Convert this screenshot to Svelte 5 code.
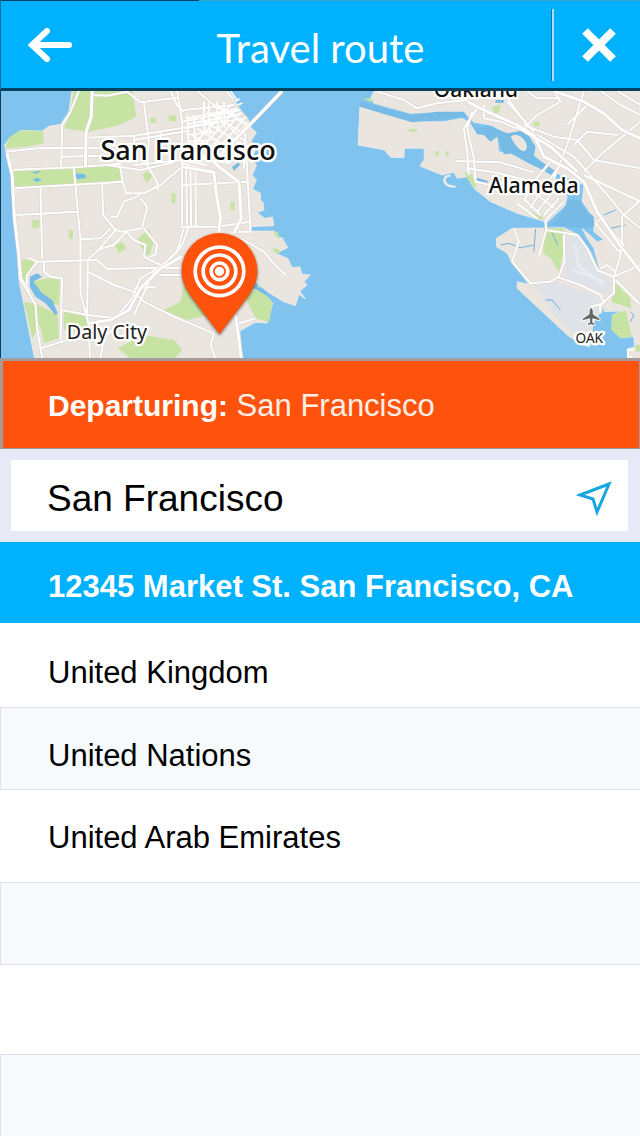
<script>
	let query = $state("San Francisco");

	const selected = "12345 Market St. San Francisco, CA";
	const results = [
		{ name: "United Kingdom", size: "first" },
		{ name: "United Nations", size: "" },
		{ name: "United Arab Emirates", size: "tall" },
		{ name: "", size: "" },
		{ name: "", size: "spacer" },
		{ name: "", size: "" },
	];

	// roads on the San Francisco side, in map units
	const westRoads = [
		"M235 18 L210 80 L185 120 L182 245",
		"M15 200 L110 190 L300 188 L400 175",
		"M30 255 L220 247 L320 240 L358 236 L366 290 L300 295 L38 310",
		"M255 158 L400 152 L540 130 L640 110",
		"M185 215 L310 212",
		"M320 240 L420 255 L520 232",
		"M275 30 L320 32 L380 20 L420 52 L530 38",
		"M430 50 L445 170 L440 240 L470 290 L472 315",
		"M530 18 L545 110 L545 420",
		"M510 18 L530 60 L550 80",
		"M400 150 L403 190 M480 140 L482 230",
		"M400 165 L560 138",
		"M120 310 L125 520 M45 390 L230 380 M220 250 L240 465 L240 625",
		"M305 295 L308 390 L345 435 L290 500 L262 522",
		"M375 325 L430 325 L480 300 L540 250",
		"M366 290 L378 326",
		"M330 395 L350 395 L370 350 L410 335 L420 325",
		"M420 340 L440 365 L425 430 L365 440 L345 435",
		"M240 463 L300 460 L330 430",
		"M290 495 L340 480 L378 440 L400 465 L435 480 L430 515 L480 540",
		"M430 430 L450 455 L470 480 L465 510 L445 515",
		"M85 518 L110 530 L290 525 L320 552 L480 548 L545 550",
		"M130 530 L130 560 L150 575 L185 580 L182 680 L180 765",
		"M240 625 L265 720 L268 820 M262 525 L260 690",
		"M262 560 L340 600 L400 620 L430 650 L520 695 L640 745",
		"M185 675 L260 690 L350 700",
		"M110 530 L80 570 L78 610 L105 660 L110 730 L125 820",
		"M120 790 L215 760 L262 765 M300 820 L310 760 L360 710",
		"M557 250 L560 420 M570 255 L572 425 M585 260 L586 425",
		"M540 425 L650 425 L750 410 M545 300 L740 290",
		"M690 130 L735 170 L750 440 L715 440",
		"M735 150 L730 250",
		"M565 425 L545 480 L510 520 L460 560 L400 690",
		"M550 430 L530 500 L480 545 L420 580 L395 640 L350 695",
		"M400 610 L465 605 M480 570 L545 570",
		"M640 745 L630 780 L645 820",
		"M700 720 L765 700 M720 460 L790 500 L820 535 L855 570",
		"M590 18 L640 60 L700 90 M550 75 L700 60",
		"M545 110 L720 75 M550 130 L735 100",
		"M400 240 L640 215 M550 215 L690 235",
	];
	const westHighways = [
		"M275 18 L272 95 L257 140 L255 245",
		"M845 18 L745 122 L640 230 L660 250 L715 290 L722 400 L700 445",
		"M545 245 L640 262 L648 330 L660 400 L655 445",
		"M705 690 L712 740 L722 820",
		"M545 515 L480 550 L420 610 L385 675 L330 705 L265 715",
		"M20 205 L35 270 L42 400 L55 510 L60 580 L85 620",
	];
	const downtown = [
		"M560 200 L690 60 M580 215 L710 70 M600 225 L722 82 M620 230 L735 96 M640 235 L745 110",
		"M640 60 L740 120 M620 80 L735 150 M600 100 L720 175 M590 130 L700 200 M575 150 L680 225",
		"M610 50 L612 150 M625 55 L628 150 M650 50 L652 140 M670 50 L672 130 M560 90 L565 190 M580 90 L585 190",
		"M560 100 L710 72 M560 118 L715 88 M560 150 L640 140 M560 170 L630 165",
		"M540 235 L600 250 M535 225 L620 240",
		"M680 22 L700 42 M690 18 L712 48 M704 48 L718 42 M712 60 L726 54",
	];

	// roads on the Oakland side
	const eastRoads = [
		"M170 20 L250 45 L290 70 L350 55 L440 45",
		"M470 70 L430 130 L440 200 L445 270 M455 80 L440 130 L460 220 L465 290 L510 300",
		"M405 228 L540 232 L640 262 M440 250 L520 262 L640 290",
		"M490 60 L490 100 L540 110 L600 135",
		"M545 18 L620 120 M560 50 L640 140",
		"M610 130 L650 90 L720 50 L700 18",
		"M790 18 L765 100 L740 180 L700 280",
		"M610 120 L700 155 L770 165 L820 225 L960 250",
		"M650 150 L760 215 L870 340 L910 390 L960 430",
		"M790 260 L850 200 L960 110 M760 180 L800 140 L890 150",
		"M690 230 L640 290 L610 350 M720 240 L660 320 L630 370",
		"M590 355 L650 400 M610 340 L660 390 M640 320 L700 370",
		"M730 350 L675 405 M715 340 L670 390 M690 330 L650 380",
		"M790 270 L960 350 M910 390 L960 345 M905 390 L905 480",
		"M675 405 L677 435 L655 515",
		"M580 430 L595 470 L575 530 L630 595 L690 590 L715 575 L732 530 L730 450",
		"M677 435 L770 450 L800 490 L830 555 L880 575 L960 540",
		"M715 578 L780 600 L840 630 L850 655 L810 665",
		"M905 490 L880 580 L880 625 L850 650 L838 665 L840 685",
		"M825 415 L895 500 L910 480 L840 400 Z",
		"M885 585 L960 660 M840 550 L860 540 L885 560",
		"M840 18 L900 60 L960 90 M890 18 L960 60",
		"M740 120 L800 60 M620 18 L650 40 L720 40",
	];
	const eastHighways = [
		"M440 50 L500 80 L590 120 L640 150 L670 215 L740 250 L790 290 L830 380 L905 490 L960 560",
		"M700 18 L790 50 L850 85 L905 135 L960 160",
		"M590 125 L690 185 L770 260",
	];
</script>

<svelte:head>
	<title>Travel route</title>
</svelte:head>

<div class="screen">
	<header>
		<button class="back" aria-label="Back">
			<svg width="46" height="38" viewBox="0 0 46 38">
				<path d="M20 5 L5 19 L20 33 M5 19 H42" fill="none" stroke="#fff" stroke-width="6" stroke-linecap="round" stroke-linejoin="miter" />
			</svg>
		</button>
		<h1>Travel route</h1>
		<button class="close" aria-label="Close">
			<svg width="36" height="36" viewBox="0 0 36 36">
				<path d="M4 4 L32 32 M32 4 L4 32" fill="none" stroke="#fff" stroke-width="8" />
			</svg>
		</button>
	</header>

	<svg class="map" viewBox="0 18 1920 801" preserveAspectRatio="xMidYMid slice" role="img" aria-label="Map of the bay">
		<rect y="0" width="1920" height="840" fill="#80c3ee" />

		<!-- peninsula -->
		<path class="land" d="M215 10 L205 80 L180 118 L145 124 L125 138 L60 136 L28 158 L12 180 L20 208 L32 260 L36 320 L48 440 L52 525 L56 590 L72 670 L92 770 L106 840 H728 L718 738 L765 712 L800 714 L806 690 L817 655 L790 625 L750 610 L765 590 L800 620 L850 650 L885 662 L895 628 L915 642 L898 618 L920 600 L910 590 L930 570 L905 568 L898 545 L875 548 L862 520 L825 505 L862 488 L845 458 L828 458 L822 438 L750 438 L752 425 L820 422 L816 396 L792 400 L770 382 L790 376 L788 352 L780 345 L780 325 L756 312 L768 286 L756 270 L768 240 L752 222 L768 190 L752 168 L768 142 L752 128 L742 100 L720 75 L704 48 L680 10 Z" />
		<g class="park">
			<path d="M218 18 L395 18 L408 95 L350 122 L262 140 L190 130 L210 85 Z" />
			<path d="M25 158 L60 136 L128 138 L130 175 L80 185 L15 190 Z" />
			<path d="M34 256 L220 247 L355 237 L364 285 L300 292 L38 306 Z" />
			<path d="M58 522 L105 530 L82 570 L80 600 L60 580 Z" />
			<path d="M88 590 L150 578 L178 585 L175 660 L125 650 Z" />
			<path d="M70 650 L100 655 L115 660 L172 690 L175 760 L130 775 L118 720 L95 760 Z" />
			<path d="M190 680 L258 692 L260 740 L190 735 Z" />
			<path d="M350 790 L430 750 L520 765 L545 795 L525 819 L390 819 Z" />
			<path d="M490 675 L540 650 L550 600 L600 650 L620 690 L560 705 Z" />
			<path d="M735 640 L775 600 L792 625 L817 655 L805 712 L765 700 Z" />
			<path d="M410 465 L445 430 L460 470 L445 515 L430 500 Z" />
			<path d="M425 270 L440 260 L455 272 L440 295 Z M513 325 h12 v30 h-12 Z M342 480 L365 470 L378 490 L355 505 Z" />
			<path d="M95 405 h22 v25 h-22 Z M205 435 h12 v26 h-12 Z M450 98 h16 v16 h-16 Z M505 92 h22 v16 h-22 Z M690 350 h12 v24 h-12 Z" />
			<path d="M818 438 L832 442 L838 460 L828 458 Z M815 490 L835 492 L840 505 L822 503 Z" />
		</g>
		<g class="creek">
			<path d="M88 575 L110 565 L125 575 L98 590 L125 625 L155 645 L172 685 L165 690 L135 655 L105 635 L88 605 Z" />
			<path d="M225 265 L255 268 L255 280 L228 282 Z M92 262 L120 258 L110 266 Z M95 285 L110 278 L125 285 L108 290 Z" />
			<path d="M695 245 L715 232 L718 240 L700 258 Z M762 600 L802 622 L798 632 L762 610 Z" />
		</g>
		<g class="casing">
			{#each westRoads as d}<path {d} />{/each}
		</g>
		<g class="road">
			{#each westRoads as d}<path {d} />{/each}
		</g>
		<g class="street">
			{#each downtown as d}<path {d} />{/each}
		</g>
		<g class="casing wide">
			{#each westHighways as d}<path {d} />{/each}
		</g>
		<g class="highway">
			{#each westHighways as d}<path {d} />{/each}
		</g>

		<!-- east bay -->
		<g transform="translate(960 0)">
			<path class="land" d="M165 10 L150 40 L160 55 L270 85 L350 82 L430 82 L460 112 L510 120 L560 145 L610 135 L635 170 L640 210 L710 265 L790 300 L785 350 L800 370 L820 410 L820 440 L850 465 L830 470 L785 430 L800 460 L820 490 L838 555 L890 600 L860 650 L850 680 L905 678 L875 690 L875 735 L900 758 L940 755 L942 785 L920 792 L922 819 L975 840 V10 Z" />
			<path class="land" d="M118 65 L160 75 L275 110 L370 110 L425 100 L450 115 L470 145 L530 155 L535 200 L580 208 L630 235 L680 265 L720 290 L740 335 L735 360 L680 412 L590 385 L510 350 L460 310 L440 275 L410 280 L400 262 L365 270 L298 243 L312 222 L310 190 L252 190 L250 218 L210 217 L192 195 L113 180 Z" />
			<path class="land" d="M528 460 L575 430 L730 428 L775 450 L810 500 L838 560 L890 590 L880 640 L840 680 L815 720 L808 785 L785 780 L740 750 L590 610 L590 590 L625 598 L575 535 L560 505 L528 485 Z" />
			<path fill="#dfe2e6" d="M735 455 L770 455 L800 500 L830 560 L872 585 L870 630 L840 625 L735 580 Z M640 600 L710 590 L830 635 L845 665 L820 700 L812 780 L790 775 L700 690 Z" />
			<path fill="none" stroke="#e9ebee" stroke-width="8" d="M762 480 L775 545 L850 600 M755 555 L850 590" />
			<g class="park">
				<path d="M672 430 H730 V500 L715 560 L690 520 L668 505 Z" />
				<path d="M885 595 L930 640 L932 670 L872 650 Z" />
				<path d="M875 690 L915 676 L935 755 L900 758 L872 735 Z" />
				<path d="M430 262 L452 265 L468 300 L462 312 L440 280 Z M620 375 L665 395 L670 405 L640 398 Z" />
				<path d="M265 132 h24 v8 h-24 Z M345 198 h10 v14 h-10 Z M375 200 h10 v14 h-10 Z M640 110 h18 v14 h-18 Z M125 40 L160 42 L150 50 Z M515 65 L540 60 L535 85 L520 85 Z M945 780 h15 v20 h-15 Z" />
			</g>
			<g class="creek">
				<path d="M448 112 L470 130 L500 122 L560 145 L615 135 L645 185 L640 215 L710 262 L705 272 L630 238 L570 205 L550 208 L530 155 L510 170 L490 150 L470 148 Z" />
				<path d="M118 50 L180 65 L270 90 L350 80 L430 80 L440 95 L350 105 L275 112 L200 90 L118 65 Z" />
				<path d="M740 345 L780 345 L790 370 L820 395 L820 425 L785 430 L740 425 L690 420 L735 370 Z" />
				<path d="M525 45 h25 v8 h-25 Z M470 278 L502 288 L500 300 L468 288 Z" />
			</g>
			<path class="land" d="M572 155 Q590 143 610 165 Q625 185 612 198 Q590 195 572 155 Z" />
			<path fill="none" stroke="#6cb2de" stroke-width="3" d="M540 480 L565 475 L600 488 L640 480 M645 432 L640 500 M695 445 L712 480 M675 645 L695 645 L720 675 M850 390 L885 375 M870 430 L915 420 M930 680 L940 690 L930 710" />
			<path fill="none" stroke="#f1ece6" stroke-width="7" d="M405 305 Q378 305 372 290 Q370 272 390 272" />
			<g class="casing">
				{#each eastRoads as d}<path {d} />{/each}
			</g>
			<g class="road">
				{#each eastRoads as d}<path {d} />{/each}
			</g>
			<g class="casing wide">
				{#each eastHighways as d}<path {d} />{/each}
			</g>
			<g class="highway">
				{#each eastHighways as d}<path {d} />{/each}
			</g>
			<path fill="none" stroke="#fff" stroke-width="5" d="M942 794 H922 V815 H935" />
			<path fill="#666" stroke="#fff" stroke-width="5" paint-order="stroke" d="M812 668 Q818 672 817 688 L837 701 V706 L816 700 L815 712 L822 717 V720 L812 718 L802 720 V717 L809 712 L808 700 L787 706 V701 L807 688 Q806 672 812 668 Z" />
		</g>

		<g class="label">
			<text x="300" y="225" font-size="81">San Francisco</text>
			<text x="199" y="763" font-size="59" class="minor">Daly City</text>
			<text x="1300" y="35" font-size="63">Oakland</text>
			<text x="1465" y="325" font-size="64">Alameda</text>
			<text x="1725" y="773" font-size="41" class="minor">OAK</text>
		</g>

		<!-- departure pin -->
		<path class="pin" d="M657 748 L570 632 Q543 595 543 558 A114 114 0 0 1 771 558 Q771 595 744 632 Z" />
		<g fill="none" stroke="#fff" stroke-width="11">
			<circle cx="657" cy="559" r="73" />
			<circle cx="657" cy="559" r="49" />
			<circle cx="657" cy="559" r="25" />
		</g>
		<circle cx="657" cy="559" r="14" fill="#fff" />
	</svg>

	<p class="departure"><strong>Departuring:</strong> San Francisco</p>

	<form class="search" onsubmit={(e) => e.preventDefault()}>
		<div class="field">
			<input type="text" aria-label="Departure city" bind:value={query} />
			<button class="locate" aria-label="Use my location">
				<svg width="36" height="36" viewBox="0 0 36 36">
					<path d="M4 15 L33 4 L21 32 L17 19 Z" fill="none" stroke="#16a6e0" stroke-width="3" />
				</svg>
			</button>
		</div>
	</form>

	<ul>
		<li class="selected">{selected}</li>
		{#each results as row}
			<li class={row.size}>{row.name}</li>
		{/each}
	</ul>
</div>

<style>
	:global(body) {
		margin: 0;
		background: #fff;
	}

	.screen {
		display: flex;
		flex-direction: column;
		min-height: 100vh;
		font-family: "Liberation Sans", Arial, sans-serif;
		overflow: hidden;
	}

	button {
		display: flex;
		align-items: center;
		justify-content: center;
		padding: 0;
		border: 0;
		background: none;
		cursor: pointer;
	}

	header {
		display: flex;
		align-items: center;
		box-sizing: border-box;
		height: 91px;
		padding-top: 2px;
		background:
			linear-gradient(90deg, #04426a 31%, #3ba3d2 31%) top / 100% 1px no-repeat,
			#00b2fe;
		border-left: 1px solid #0872a5;
		border-bottom: 3px solid #04425f;
	}

	h1 {
		flex: 1;
		margin: 0;
		padding-top: 6px;
		font: 400 40px/48px Lato, sans-serif;
		text-align: center;
		color: #fff;
	}

	.back {
		width: 88px;
		height: 72px;
		padding-left: 10px;
	}

	.close {
		width: 88px;
		height: 72px;
		padding-left: 4px;
		border-left: 2px solid #a3e0fb;
		box-shadow: -1px 0 0 #0879b5;
	}

	.map {
		display: block;
		box-sizing: border-box;
		width: 100%;
		height: 267px;
		border-left: 1px solid #0f3a58;
	}

	.land {
		fill: #ebe5e0;
		stroke: #f3eee8;
		stroke-width: 2;
	}

	.park {
		fill: #c7e3a4;
	}

	.creek {
		fill: #76bae6;
	}

	.casing,
	.road,
	.street,
	.highway {
		fill: none;
		stroke: #fff;
		stroke-width: 6;
		stroke-linejoin: round;
	}

	.casing {
		stroke: #d6d1cc;
		stroke-width: 9;
	}

	.street {
		stroke-width: 5;
	}

	.highway {
		stroke-width: 9;
	}

	.casing.wide {
		stroke-width: 12;
	}

	.label {
		font-family: "Noto Sans", sans-serif;
		font-weight: 500;
		fill: #111;
		stroke: #fff;
		stroke-width: 14;
		stroke-linejoin: round;
		paint-order: stroke;
	}

	.minor {
		font-weight: 400;
		fill: #222;
	}

	.pin {
		fill: #ff530d;
		filter: drop-shadow(0 4px 4px rgba(0, 0, 0, 0.5));
	}

	.departure {
		margin: 0;
		padding: 24px 48px 22px 45px;
		font-size: 31px;
		line-height: 41px;
		color: #ffeee6;
		background: #ff530d;
		border: 1px solid #a59a9c;
		border-width: 3px 1px 1px 3px;
	}

	.departure strong {
		font-size: 30px;
		color: #fff;
	}

	.search {
		padding: 11px 12px 11px 11px;
		background: #e6eaf6;
	}

	.field {
		display: flex;
		align-items: center;
		height: 71px;
		background: #fff;
	}

	input {
		flex: 1;
		min-width: 0;
		padding: 6px 0 0 36px;
		border: 0;
		outline: 0;
		background: none;
		font: 37px/44px "Liberation Sans", Arial, sans-serif;
		color: #000;
	}

	.locate {
		width: 68px;
		height: 71px;
		padding-top: 4px;
	}

	ul {
		display: flex;
		flex: 1;
		flex-direction: column;
		margin: 0;
		padding: 0;
		list-style: none;
	}

	li {
		box-sizing: border-box;
		height: 83px;
		padding: 28px 47px 0;
		font-size: 31px;
		line-height: 40px;
		border: 1px solid #dfe2ea;
		border-right: 0;
		background: #f7fafd;
	}

	li.selected {
		height: 81px;
		padding: 25px 48px 0;
		border: 0;
		font-weight: bold;
		color: #fff;
		background: #00b2fe;
	}

	li.first,
	li.tall,
	li.spacer {
		padding: 28px 48px 0;
		border: 0;
		background: #fff;
	}

	li.first {
		height: 84px;
		padding-top: 30px;
	}

	li.tall {
		height: 92px;
	}

	li.spacer {
		height: 89px;
	}
</style>
